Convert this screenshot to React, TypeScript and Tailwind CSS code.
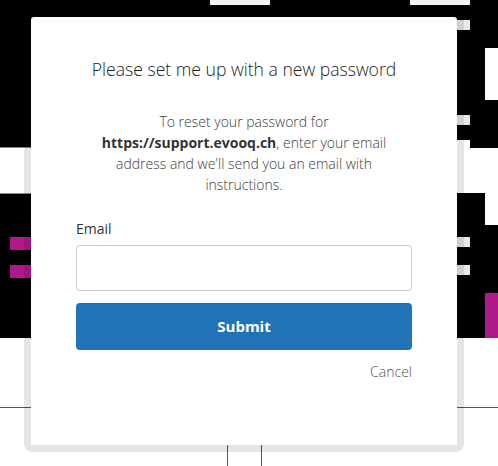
export default function App() {
  return (
    <div className="relative h-[466px] w-[498px] overflow-hidden bg-white font-['Open_Sans',sans-serif]">
      {/* background picture behind the dialog */}
      <div className="absolute left-0 top-0 h-[148px] w-[498px] bg-black" />
      <div className="absolute left-[210px] top-0 h-[5px] w-[60px] bg-[#f2f2f2]" />
      <div className="absolute left-[410px] top-0 h-[5px] w-[60px] bg-[#f2f2f2]" />
      <div className="absolute left-[457px] top-[20px] h-[10px] w-[13px] bg-[#e8e8e8]" />
      <div className="absolute left-[485px] top-[48px] h-[52px] w-[13px] bg-white" />
      <div className="absolute left-[457px] top-[115px] h-[10px] w-[13px] bg-[#e8e8e8]" />
      <div className="absolute left-[457px] top-[140px] h-[8px] w-[13px] bg-white" />
      <div className="absolute left-0 top-[147px] h-[1px] w-[31px] bg-[#888]" />
      <div className="absolute left-0 top-[193px] h-[145px] w-[498px] bg-black" />
      <div className="absolute left-0 top-[193px] h-[1px] w-[31px] bg-[#888]" />
      <div className="absolute left-[485px] top-[193px] h-[32px] w-[13px] bg-white" />
      <div className="absolute left-[10px] top-[237px] h-[13px] w-[21px] bg-[#b0198c]" />
      <div className="absolute left-[10px] top-[265px] h-[13px] w-[21px] bg-[#b0198c]" />
      <div className="absolute left-[457px] top-[237px] h-[10px] w-[13px] bg-[#e8e8e8]" />
      <div className="absolute left-[457px] top-[265px] h-[10px] w-[13px] bg-[#e8e8e8]" />
      <div className="absolute left-[485px] top-[293px] h-[45px] w-[13px] bg-[#b0198c]" />
      <div className="absolute left-0 top-[407px] h-[1px] w-[498px] bg-[#a0288f]" />
      <div className="absolute left-[227px] top-[445px] h-[21px] w-[1px] bg-[#a0288f]" />
      <div className="absolute left-[261px] top-[445px] h-[21px] w-[1px] bg-[#a0288f]" />

      {/* dialog */}
      <div className="absolute left-[24px] top-[10px] w-[440px] rounded-lg border-[7px] border-black/10">
        <div className="flex h-[428px] flex-col rounded-[3px] bg-white px-[45px] pt-[40px]">
          <h1 className="text-center text-[17.6px] leading-6 font-light text-[#222]">
            Please set me up with a new password
          </h1>
          <p className="mt-[30px] px-[20px] text-center text-[14px] leading-[21px] font-light text-[#3d3d3d]">
            To reset your password for{" "}
            <strong className="font-bold text-[#333]">https://support.evooq.ch</strong>, enter your email
            address and we'll send you an email with instructions.
          </p>
          <label className="mt-[24px] text-[14px] leading-5 text-[#333]">Email</label>
          <input
            type="email"
            className="mt-[6px] h-[46px] w-full rounded-[4px] border border-[#ccc] bg-white px-3 text-[14px] outline-none"
          />
          <button className="mt-[12px] h-[47px] w-full rounded-[4px] bg-[#2173b8] text-[15px] font-bold text-white">
            Submit
          </button>
          <div className="mt-[12px] text-right text-[14px] leading-5 font-light text-[#555]">Cancel</div>
        </div>
      </div>
    </div>
  );
}
